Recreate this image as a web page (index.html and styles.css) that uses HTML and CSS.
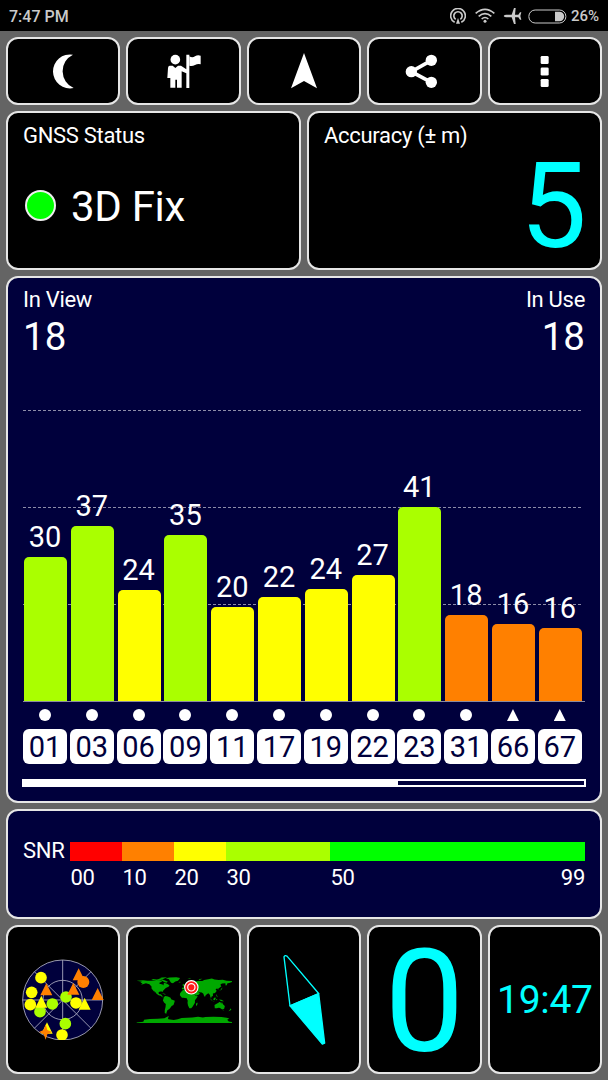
FILE: index.html
```html
<!DOCTYPE html>
<html lang="en">
<head>
  <meta charset="UTF-8" />
  <meta name="viewport" content="width=device-width, initial-scale=1" />
  <title>GNSS Status</title>
  <link rel="stylesheet" href="styles.css">
</head>
<body>

  <header class="status-bar">
    <span class="clock">7:47 PM</span>
    <div class="status-icons">
      <svg class="hotspot" viewBox="440 23 48 48" width="16" height="16">
        <path d="M454 66a22 22 0 1 1 20 0" />
        <path d="M457 57a12.500 12.500 0 1 1 14 0" />
        <path class="solid" d="M464 53l6 17h-12z" />
      </svg>
      <svg class="wifi" viewBox="514 23 60 48" width="20" height="16">
        <path d="M516 39q28 -24 56 0M525 48q19 -16 38 0M534 56q10 -9 20 0" />
        <circle cx="544" cy="63" r="4.500" />
      </svg>
      <svg class="plane" viewBox="600 20 57 54" width="19" height="18">
        <path d="M602 47q2 -4 8 -4h16l7 -20h5l-2 20h10l5 -7h4l-3 11 3 11h-4l-5 -7h-10l2 20h-5l-7 -20h-16q-6 0 -8 -4z" />
      </svg>
      <svg class="battery" viewBox="674 25 116 45" width="38.700" height="15">
        <rect x="676.500" y="28" width="111" height="39" rx="19" />
        <path d="M755 33h13a14.500 14.500 0 0 1 0 29h-13z" />
      </svg>
      <span class="percent">26%</span>
    </div>
  </header>

  <main class="screen">
    <nav class="row toolbar">
      <button class="card" aria-label="Night mode">
        <svg viewBox="140 154 100 120" width="33.300" height="40">
          <path d="M218 165a51 51 0 1 0 2 100a55 55 0 0 1 -2 -100z" />
        </svg>
      </button>
      <button class="card" aria-label="Waypoints">
        <svg viewBox="491 154 120 120" width="40" height="40">
          <circle cx="525" cy="180" r="14.500" />
          <path d="M508 198h9l8 7 8 -7h9l16 11v-44h9v100h-9v-44l-14 -6v49h-14v-24h-5v24h-15v-29h-9l2 -30q1 -7 5 -7z" />
          <path d="M567 170q9 6 17 0t17 -2v26q-9 -2 -17 2t-17 2z" />
        </svg>
      </button>
      <button class="card" aria-label="Navigate">
        <svg viewBox="852 154 120 120" width="40" height="40">
          <path d="M912 160l39 106 -39 -22 -39 22z" />
        </svg>
      </button>
      <button class="card" aria-label="Share">
        <svg class="share" viewBox="301 154 120 120" width="40" height="40">
          <path d="M383 182l-60 34 60 32" />
          <circle cx="383" cy="182" r="17" />
          <circle cx="323" cy="216" r="17" />
          <circle cx="383" cy="248" r="17" />
        </svg>
      </button>
      <button class="card" aria-label="Menu">
        <svg viewBox="664 154 120 120" width="40" height="40">
          <rect x="711" y="169" width="24" height="24" rx="4" />
          <rect x="711" y="203.500" width="24" height="24" rx="4" />
          <rect x="711" y="238" width="24" height="24" rx="4" />
        </svg>
      </button>
    </nav>

    <section class="row summary">
      <div class="card">
        <h2>GNSS Status</h2>
        <p class="fix"><i class="led"></i>3D Fix</p>
      </div>
      <div class="card">
        <h2>Accuracy (± m)</h2>
        <p class="accuracy">5</p>
      </div>
    </section>

    <section class="card blue chart">
      <div class="counts">
        <div><h2>In View</h2><p>18</p></div>
        <div class="in-use"><h2>In Use</h2><p>18</p></div>
      </div>

      <div class="plot">
        <div class="col"><span>30</span><div class="bar lime" style="height:144px"></div></div>
        <div class="col"><span>37</span><div class="bar lime" style="height:175.500px"></div></div>
        <div class="col"><span>24</span><div class="bar yellow" style="height:111.500px"></div></div>
        <div class="col"><span>35</span><div class="bar lime" style="height:166px"></div></div>
        <div class="col"><span>20</span><div class="bar yellow" style="height:94.500px"></div></div>
        <div class="col"><span>22</span><div class="bar yellow" style="height:104.500px"></div></div>
        <div class="col"><span>24</span><div class="bar yellow" style="height:112px"></div></div>
        <div class="col"><span>27</span><div class="bar yellow" style="height:126px"></div></div>
        <div class="col"><span>41</span><div class="bar lime" style="height:194px"></div></div>
        <div class="col"><span>18</span><div class="bar orange" style="height:86.500px"></div></div>
        <div class="col"><span>16</span><div class="bar orange" style="height:77px"></div></div>
        <div class="col"><span>16</span><div class="bar orange" style="height:73.500px"></div></div>
      </div>

      <div class="sats">
        <div class="sat"><i class="dot"></i><b>01</b></div>
        <div class="sat"><i class="dot"></i><b>03</b></div>
        <div class="sat"><i class="dot"></i><b>06</b></div>
        <div class="sat"><i class="dot"></i><b>09</b></div>
        <div class="sat"><i class="dot"></i><b>11</b></div>
        <div class="sat"><i class="dot"></i><b>17</b></div>
        <div class="sat"><i class="dot"></i><b>19</b></div>
        <div class="sat"><i class="dot"></i><b>22</b></div>
        <div class="sat"><i class="dot"></i><b>23</b></div>
        <div class="sat"><i class="dot"></i><b>31</b></div>
        <div class="sat"><i class="tri"></i><b>66</b></div>
        <div class="sat"><i class="tri"></i><b>67</b></div>
      </div>

      <div class="scroll"><div class="thumb"></div></div>
    </section>

    <section class="card blue snr">
      <h2>SNR</h2>
      <div class="scale">
        <div class="step s10"><i class="red"></i><span>00</span></div>
        <div class="step s10"><i class="orange"></i><span>10</span></div>
        <div class="step s10"><i class="yellow"></i><span>20</span></div>
        <div class="step s20"><i class="lime"></i><span>30</span></div>
        <div class="step s49"><i class="green"></i><span>50</span><span>99</span></div>
      </div>
    </section>

    <section class="row tiles">
      <div class="card">
        <!-- sky view -->
        <svg viewBox="68 115 245 245" width="81.670" height="81.670">
          <g class="sky">
            <circle cx="190" cy="238" r="120" />
            <circle cx="190" cy="238" r="59" />
            <path d="M190 118v240M70 238h240M105 153l170 170M275 153l-170 170" />
          </g>
          <g class="f-lime">
            <circle cx="200" cy="229" r="17.500" />
            <circle cx="159" cy="250" r="17.500" />
            <circle cx="122" cy="273" r="17.500" />
            <circle cx="198" cy="309" r="17.500" />
          </g>
          <circle class="f-orange" cx="252" cy="184" r="18" />
          <g class="f-yellow">
            <circle cx="125" cy="171" r="17.500" />
            <circle cx="97" cy="215" r="17.500" />
            <circle cx="93" cy="252" r="17.500" />
            <circle cx="230" cy="247" r="17.500" />
            <circle cx="188" cy="343" r="17.500" />
            <path d="M126 225l18 36h-36zM256 231l18 36h-36zM143 305l17 34h-34z" />
          </g>
          <g class="f-orange">
            <path d="M238 143l18 36h-36zM141 188l18 36h-36zM222 186l18 36h-36zM295 202l18 36h-36z" />
            <path d="M139 311l5 17 14 6 -14 7 -5 16 -6 -16 -14 -7 14 -6z" />
          </g>
        </svg>
      </div>
      <div class="card">
        <!-- land outlines are in lon/lat degrees -->
        <svg viewBox="40 165 300 145" width="100" height="48.330">
          <g class="land" transform="translate(191 237.500) scale(.794 -.794)">
            <path d="M-180 70L-156 71 -140 70 -126 70 -110 69 -96 71 -84 69 -86 66 -94 62 -94 58 -82 55 -79 52 -78 58 -76 62 -68 59 -62 56 -56 52 -60 47 -66 44 -70 42 -75 37 -81 31 -80 25 -83 29 -90 29 -97 27 -97 20 -91 18 -87 21 -88 16 -84 15 -83 9 -77 8 -82 7 -90 13 -97 15 -105 20 -112 30 -114 30 -110 23 -117 32 -124 40 -124 48 -132 56 -145 60 -154 57 -164 54 -158 59 -166 63 -160 66z" />
            <path d="M-125 72L-118 76 -104 74 -92 77 -80 73 -68 69 -62 66 -68 62 -76 65 -88 71 -105 69zM-95 79L-85 82 -65 83 -76 78 -82 75z" />
            <path d="M-70 79L-55 82 -30 83 -16 80 -20 74 -24 70 -34 67 -43 60 -50 62 -54 68 -58 75z" />
            <path d="M-85 23L-75 20 -69 19 -75 18z" />
            <path d="M-77 8L-72 12 -62 10 -52 5 -50 0 -36 -6 -38 -14 -41 -22 -48 -26 -54 -34 -58 -38 -64 -42 -67 -49 -68 -55 -74 -52 -74 -42 -71 -30 -70 -18 -76 -14 -81 -5 -79 2z" />
            <path d="M-17 15L-16 22 -10 30 -5 35 10 37 20 32 33 31 37 22 43 12 51 11 46 3 40 -4 40 -14 35 -22 31 -29 26 -34 19 -34 14 -24 12 -14 13 -6 9 3 -4 5 -9 5z" />
            <path d="M44 -17L49 -13 50 -17 47 -25 44 -24z" />
            <path d="M-9 37L-9 43 -1 44 -4 48 4 52 9 55 13 54 22 56 26 60 22 62 20 66 12 58 6 60 10 64 18 70 28 71 40 67 55 69 68 69 75 72 90 75 104 78 114 74 130 72 145 73 160 70 180 69 180 65 170 61 163 60 160 53 156 52 155 60 142 59 136 54 140 49 133 43 128 39 128 35 125 40 118 38 122 31 116 23 108 21 108 12 103 10 101 3 98 9 97 16 91 22 85 19 80 14 78 8 74 14 72 20 66 25 57 26 50 30 57 23 59 22 54 17 44 13 38 21 34 29 36 36 28 37 26 40 22 37 18 41 12 44 16 38 9 44 3 43 -2 37z" />
            <path d="M-6 50L1 51 -3 58 -6 56zM-23 65L-15 66 -14 64 -18 63zM12 78L24 80 22 77zM53 71L58 76 68 77 58 72z" />
            <path d="M130 32L136 34 140 40 144 44 142 37 136 33zM95 5L104 -3 106 -6 102 -4zM109 1L116 7 119 3 115 -4 110 -2zM120 17L122 18 126 7 123 9zM120 1L125 1 122 -5zM131 -1L140 -2 150 -8 145 -8 138 -7zM105 -6L115 -8 109 -8z" />
            <path d="M114 -22L122 -17 129 -14 132 -11 137 -12 139 -17 142 -11 146 -19 153 -26 151 -35 146 -39 140 -37 135 -33 130 -32 123 -34 115 -34z" />
            <path d="M173 -35L178 -38 174 -43 167 -46 172 -40zM145 -41L148 -41 147 -44z" />
            <path d="M-180 -88L-155 -85 -152 -78 -130 -75 -100 -74 -75 -72 -65 -66 -58 -64 -62 -72 -60 -76 -40 -79 -25 -76 -10 -71 10 -70 30 -69 52 -66 70 -69 80 -67 110 -66 140 -67 160 -70 170 -73 162 -78 168 -84 180 -86 180 -90 -180 -90z" />
          </g>
          <g class="marker">
            <circle cx="212" cy="202" r="20" />
            <circle cx="212" cy="202" r="11" />
          </g>
        </svg>
      </div>
      <div class="card">
        <svg class="needle" viewBox="122 97.500 140 280" width="46.670" height="93.330">
          <path d="M131 109q3 -6 9 -2l95 112 -86 37z" />
          <path class="south" d="M149 256l86 -37 18 149 -7 3z" />
        </svg>
      </div>
      <div class="card speed">0</div>
      <div class="card time">19:47</div>
    </section>
  </main>

</body>
</html>
```
FILE: styles.css
```css
:root {
  --grey: #646464;
  --navy: #00003c;
  --line: #e6e6e6;
  --status: #cacaca;
  --cyan: #00ffff;
  --red-snr: #ff0000;
  --orange-snr: #ff8000;
  --yellow-snr: #ffff00;
  --lime-snr: #aaff00;
  --green-snr: #00ff00;
}

* {
  margin: 0;
  padding: 0;
  box-sizing: border-box;
}

body {
  width: 608px;
  height: 1080px;
  display: flex;
  flex-direction: column;
  overflow: hidden;
  background: var(--grey);
  color: #fff;
  font-family: Roboto, "Liberation Sans", sans-serif;
}

svg {
  display: block;
  fill: #fff;
}

h2 {
  font-size: 22px;
  line-height: 26px;
  font-weight: 400;
  letter-spacing: -0.3px;
}

/* Status bar */
.status-bar {
  height: 31px;
  padding: 1px 9px 0 9px;
  display: flex;
  justify-content: space-between;
  align-items: center;
  background: #000;
  color: var(--status);
  font-size: 16px;
  font-weight: 500;
}

.status-icons {
  display: flex;
  align-items: center;
}

.status-icons svg {
  fill: var(--status);
}

.hotspot path,
.wifi path {
  fill: none;
  stroke: var(--status);
  stroke-width: 5;
}

.hotspot .solid {
  fill: var(--status);
  stroke: none;
}

.wifi {
  margin-left: 9px;
}

.plane {
  margin-left: 8px;
}

.battery {
  margin: 0 4px 0 6px;
}

.battery rect {
  fill: none;
  stroke: var(--status);
  stroke-width: 3;
}

.percent {
  font-size: 15px;
}

/* Cards */
.screen {
  flex: 1;
  display: flex;
  flex-direction: column;
  gap: 6px;
  padding: 6px;
}

.row {
  display: flex;
  gap: 6px;
}

.card {
  flex: 1;
  min-width: 0;
  border: 2px solid var(--line);
  border-radius: 12px;
  background: #000;
  color: inherit;
}

.blue {
  background: var(--navy);
}

.toolbar {
  height: 68px;
}

.toolbar .card {
  display: flex;
  justify-content: center;
  align-items: center;
}

.share path {
  fill: none;
  stroke: #fff;
  stroke-width: 11;
}

/* Status and accuracy */
.summary {
  height: 159px;
}

.summary .card {
  padding: 10px 13px 0 15px;
}

.fix {
  display: flex;
  align-items: center;
  margin-top: 34px;
  font-size: 42px;
  line-height: 48px;
  letter-spacing: -0.3px;
}

.led {
  width: 31px;
  height: 31px;
  margin: -4px 15px 0 2px;
  border: 2px solid #eee;
  border-radius: 50%;
  background: var(--green-snr);
}

.accuracy {
  color: var(--cyan);
  font-size: 119px;
  line-height: 140px;
  margin-top: -12px;
  text-align: right;
}

/* Satellite chart */
.chart {
  flex: none;
  height: 527px;
  padding: 9px 15px 0;
}

.counts {
  display: flex;
  justify-content: space-between;
  height: 123px;
}

.counts p {
  font-size: 38.500px;
  line-height: 48px;
}

.in-use {
  text-align: right;
}

.plot {
  height: 292px;
  width: 562px;
  display: flex;
  align-items: flex-end;
  gap: 3.800px;
  padding: 0 1px;
  border-bottom: 1px solid #8a8aa0;
  background-image:
    repeating-linear-gradient(90deg, #8c8ca8 0 3px, transparent 3px 5px),
    repeating-linear-gradient(90deg, #8c8ca8 0 3px, transparent 3px 5px),
    repeating-linear-gradient(90deg, #8c8ca8 0 3px, transparent 3px 5px);
  background-size: 560px 1px;
  background-position: 0 0, 0 97px, 0 194px;
  background-repeat: no-repeat;
}

.col {
  width: 43px;
  text-align: center;
}

.col span {
  display: block;
  font-size: 29px;
  line-height: 34px;
  margin: 0 1px 3px 0;
}

.bar {
  border-radius: 5px 5px 0 0;
}

.red { background: var(--red-snr); }
.orange { background: var(--orange-snr); }
.yellow { background: var(--yellow-snr); }
.lime { background: var(--lime-snr); }
.green { background: var(--green-snr); }

.sats {
  display: flex;
  gap: 2.800px;
  padding-top: 7px;
}

.sat {
  width: 44px;
  display: flex;
  flex-direction: column;
  align-items: center;
  gap: 8px;
}

.dot {
  width: 12px;
  height: 12px;
  border-radius: 50%;
  background: #fff;
}

.tri {
  width: 12px;
  height: 12px;
  background: #fff;
  clip-path: polygon(50% 0, 100% 100%, 0 100%);
}

.sat b {
  width: 44px;
  height: 35px;
  border-radius: 6px;
  background: #fff;
  color: var(--navy);
  font-size: 29px;
  font-weight: 400;
  line-height: 36px;
  text-align: center;
}

.scroll {
  width: 564px;
  height: 8px;
  margin: 15px 0 0 -1px;
  border: 2px solid #fff;
}

.thumb {
  width: 374px;
  height: 100%;
  background: #fff;
}

/* SNR legend */
.snr {
  flex: none;
  height: 110px;
  padding: 27px 15px 0;
  display: flex;
}

.scale {
  flex: 1;
  display: flex;
  margin: 4px 0 0 6px;
}

.step {
  display: flex;
  flex-wrap: wrap;
  align-content: flex-start;
  justify-content: space-between;
  font-size: 22px;
  line-height: 26px;
  letter-spacing: -0.3px;
}

.step i {
  flex: 0 0 100%;
  height: 19px;
  margin-bottom: 4px;
}

.s10 { width: 52px; }
.s20 { width: 104px; }
.s49 { flex: 1; }

/* Bottom tiles */
.tiles {
  height: 149px;
}

.tiles .card {
  display: flex;
  justify-content: center;
  align-items: center;
}

.sky circle,
.sky path {
  fill: none;
  stroke: #b4b4c8;
  stroke-width: 2.500;
}

.sky circle:first-child {
  fill: var(--navy);
}

.f-lime { fill: var(--lime-snr); }
.f-yellow { fill: var(--yellow-snr); }
.f-orange { fill: var(--orange-snr); }

.land {
  fill: #00a800;
}

.marker circle {
  fill: #ff1a1a;
  stroke: #fff;
  stroke-width: 3.500;
}

.needle path {
  fill: none;
  stroke: var(--cyan);
  stroke-width: 4;
  stroke-linejoin: round;
}

.needle .south {
  fill: var(--cyan);
}

.speed,
.time {
  color: var(--cyan);
}

.tiles .speed {
  padding-top: 6px;
  font-size: 142px;
  line-height: 139px;
}

.time {
  font-size: 39px;
  letter-spacing: -0.3px;
}
```
